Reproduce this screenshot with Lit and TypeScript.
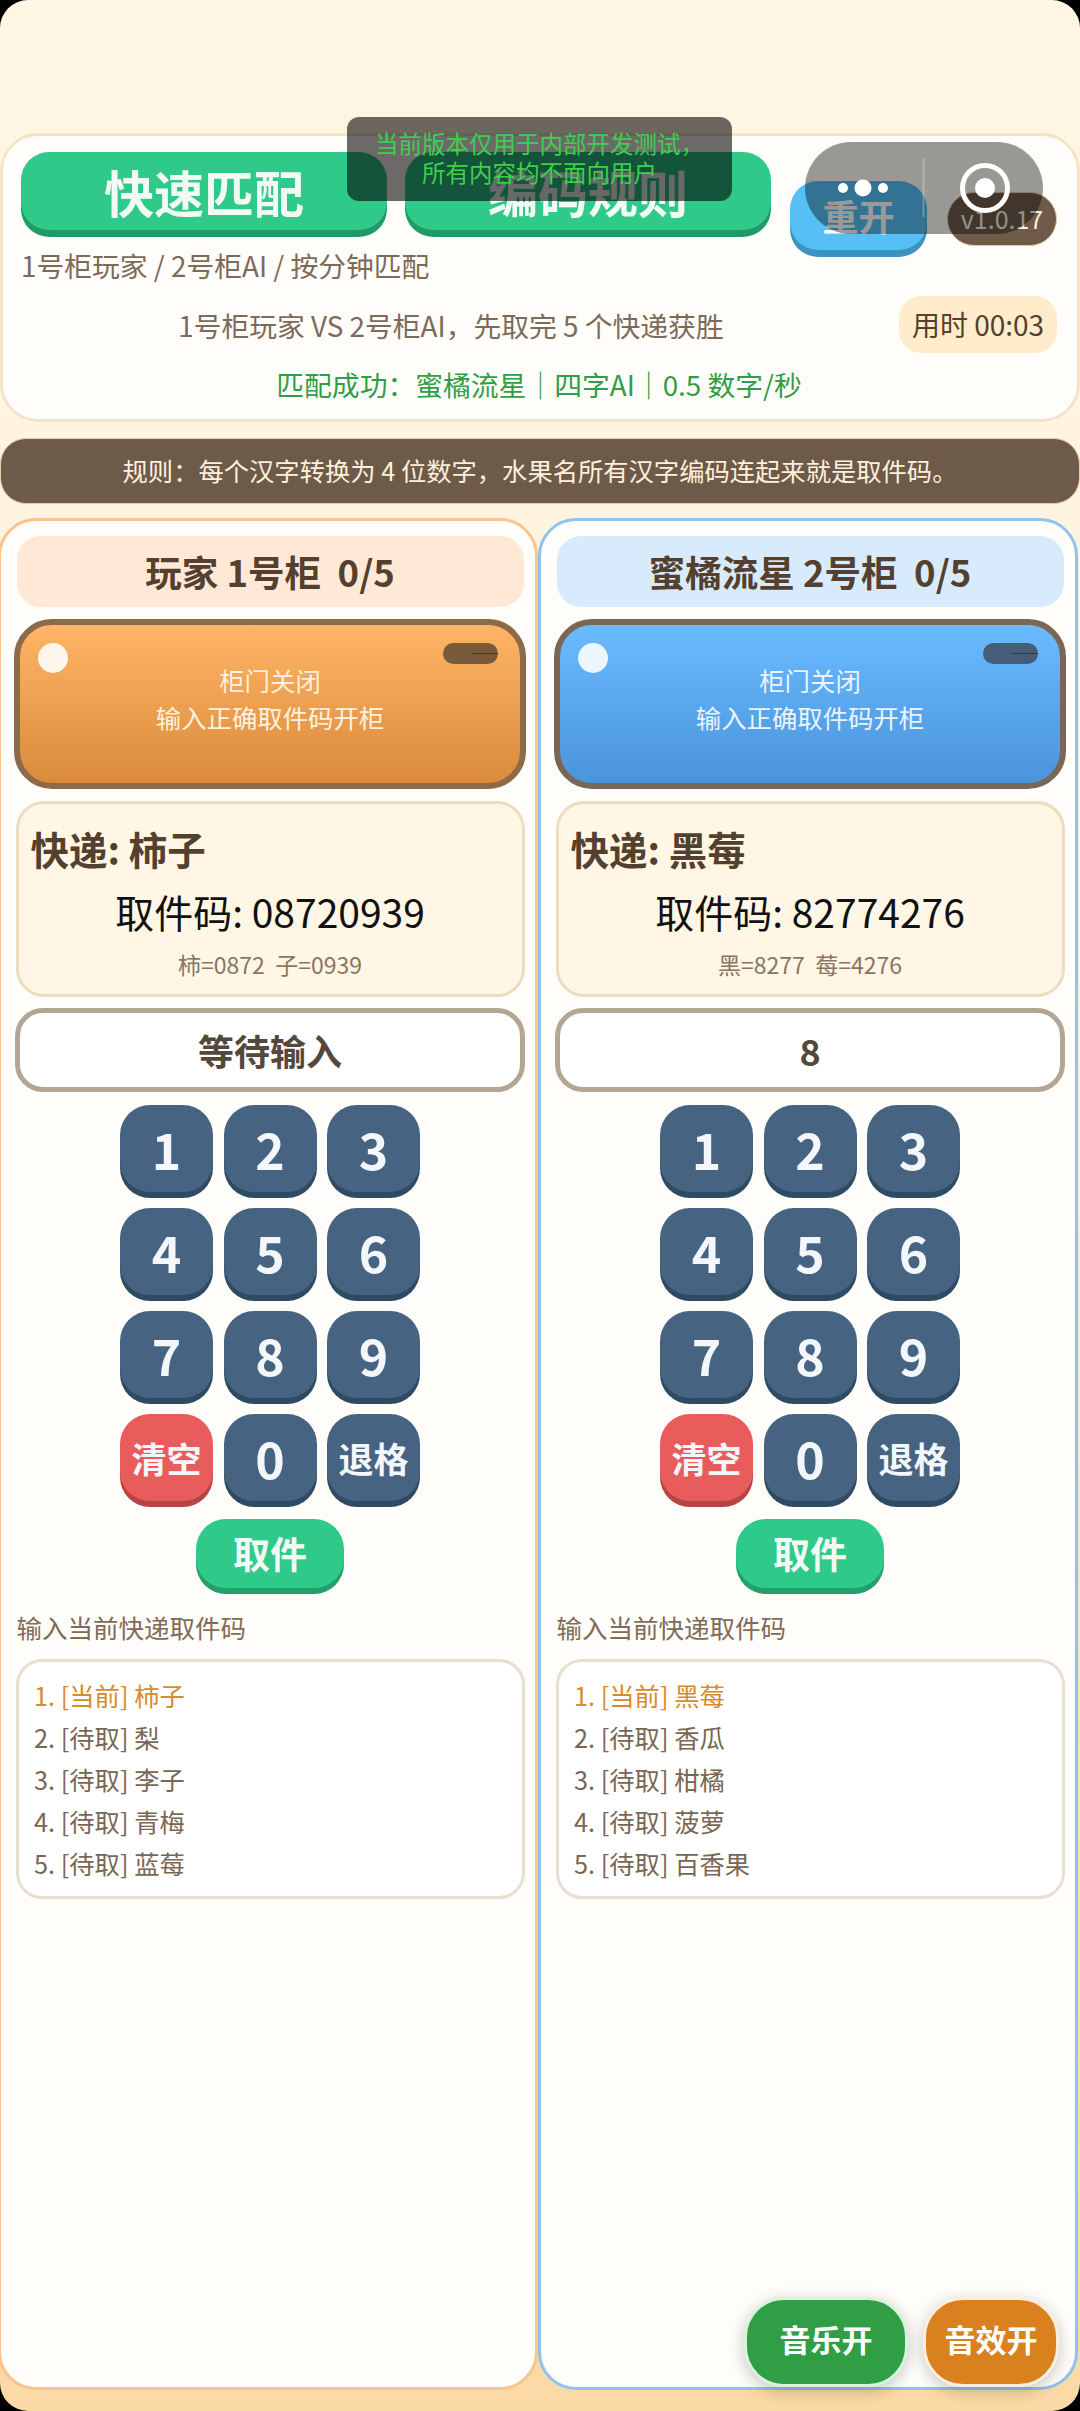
import { LitElement, html, css } from 'lit';
import { customElement, property } from 'lit/decorators.js';
import { classMap } from 'lit/directives/class-map.js';

const FONT = css`"Noto Sans CJK SC", "Noto Sans", sans-serif`;

interface Parcel {
  status: string;
  name: string;
}

const KEYS = ['1', '2', '3', '4', '5', '6', '7', '8', '9', '清空', '0', '退格'];

@customElement('locker-panel')
export class LockerPanel extends LitElement {
  @property() side = 'left'; // left = orange, right = blue
  @property() heading = '';
  @property() item = '';
  @property() code = '';
  @property() split = '';
  @property() entry = '';
  @property({ type: Array }) parcels: Parcel[] = [];

  static styles = css`
    :host {
      display: block;
      box-sizing: border-box;
      width: 540px;
      height: 1872px;
      padding: 15px 10.5px 0 14.5px;
      background: #fffdf9;
      border: 3.5px solid #f9c48d;
      border-radius: 38px;
      font-family: ${FONT};
      color: #54402e;
    }

    :host([side='right']) {
      border-color: #8fc3ec;
    }

    .title {
      height: 71px;
      margin: 0 1px;
      border-radius: 24px;
      background: #ffe9d6;
      font-size: 36.5px;
      font-weight: 700;
      line-height: 72px;
      text-align: center;
      white-space: pre;
    }

    :host([side='right']) .title {
      background: #d8ebfd;
    }

    .door {
      position: relative;
      box-sizing: border-box;
      height: 170px;
      margin: 12px -1.5px 0;
      padding-top: 36.5px;
      border: 6px solid #8c6a4a;
      border-radius: 38px;
      background: linear-gradient(#ffb566, #da8a3a);
      color: #fff1df;
      font-size: 25.4px;
      line-height: 37px;
      text-align: center;
    }

    :host([side='right']) .door {
      border-color: #7a6654;
      background: linear-gradient(#6bbaff, #4a94dc);
      color: #eaf4ff;
    }

    .led {
      position: absolute;
      left: 17.5px;
      top: 18px;
      width: 30px;
      height: 30px;
      border-radius: 50%;
      background: rgba(255, 255, 255, 0.88);
    }

    .handle {
      position: absolute;
      right: 22px;
      top: 18px;
      width: 55px;
      height: 21px;
      border-radius: 11px;
      background: #7a5a3c;
    }

    :host([side='right']) .handle {
      background: #465c78;
    }

    .handle::after {
      content: '';
      position: absolute;
      right: 0;
      top: 10px;
      width: 27px;
      height: 1px;
      background: rgba(40, 30, 20, 0.55);
    }

    .info {
      box-sizing: border-box;
      height: 196px;
      margin-top: 12px;
      padding: 21px 12px 0;
      border: 3px solid #ecdcc0;
      border-radius: 28px;
      background: #fff6e5;
    }

    .info-name {
      font-size: 38.5px;
      font-weight: 700;
      line-height: 46px;
    }

    .info-code {
      margin-top: 15px;
      color: #111;
      font-size: 39px;
      line-height: 50px;
      text-align: center;
    }

    .info-split {
      margin-top: 12px;
      color: #8a7561;
      font-size: 23px;
      line-height: 32px;
      text-align: center;
      white-space: pre;
    }

    .entry {
      box-sizing: border-box;
      height: 84px;
      margin: 11px -0.5px 0;
      border: 5px solid #b5a594;
      border-radius: 28px;
      background: #fff;
      color: #54483c;
      font-size: 36px;
      font-weight: 700;
      line-height: 74px;
      text-align: center;
    }

    .keys {
      display: grid;
      grid-template-columns: repeat(3, 93px);
      gap: 16.3px 10.4px;
      justify-content: center;
      margin-top: 12.5px;
    }

    .key {
      height: 87px;
      border-radius: 30px;
      background: #466481;
      box-shadow: 0 6px 0 #2f4a63;
      color: #f3f7fc;
      font-size: 50px;
      font-weight: 700;
      line-height: 87px;
      text-align: center;
    }

    .key.word {
      font-size: 35px;
    }

    .key.clear {
      background: #e95c5c;
      box-shadow: 0 6px 0 #b54444;
    }

    .submit {
      width: 148px;
      height: 69px;
      margin: 18px auto 0;
      border-radius: 30px;
      background: #2fc98a;
      box-shadow: 0 6px 0 #25a06c;
      color: #f3faf6;
      font-size: 37px;
      font-weight: 700;
      line-height: 69px;
      text-align: center;
    }

    .helper {
      margin: 20px 0 0 1px;
      color: #806b58;
      font-size: 25.5px;
      line-height: 38px;
    }

    .queue {
      box-sizing: border-box;
      height: 240px;
      margin-top: 13px;
      padding: 11.5px 0 0 15.5px;
      border: 3px solid #e7dfcf;
      border-radius: 26px;
      background: #fff;
      color: #7a6652;
      font-size: 25.3px;
      line-height: 42px;
    }

    .queue .now {
      color: #d98a2b;
    }
  `;

  render() {
    return html`
      <div class="title">${this.heading}</div>
      <div class="door">
        <div class="led"></div>
        <div class="handle"></div>
        柜门关闭<br />输入正确取件码开柜
      </div>
      <div class="info">
        <div class="info-name">快递: ${this.item}</div>
        <div class="info-code">取件码: ${this.code}</div>
        <div class="info-split">${this.split}</div>
      </div>
      <div class="entry">${this.entry}</div>
      <div class="keys">
        ${KEYS.map(
          (k) => html`<div class=${classMap({ key: true, word: k.length > 1, clear: k === '清空' })}>${k}</div>`
        )}
      </div>
      <div class="submit">取件</div>
      <div class="helper">输入当前快递取件码</div>
      <div class="queue">
        ${this.parcels.map(
          (p, i) => html`<div class=${classMap({ now: i === 0 })}>${i + 1}. [${p.status}] ${p.name}</div>`
        )}
      </div>
    `;
  }
}

@customElement('app-root')
export class AppRoot extends LitElement {
  static styles = css`
    :host {
      display: block;
      width: 1080px;
      height: 2411px;
      background: #000;
      font-family: ${FONT};
    }

    .screen {
      position: relative;
      box-sizing: border-box;
      height: 2411px;
      padding-top: 133px;
      overflow: hidden;
      border-radius: 28px;
      background: linear-gradient(#fff6e3 0%, #fff3dc 40%, #fad9a5 100%);
    }

    .head {
      box-sizing: border-box;
      height: 289px;
      padding: 16px 20px 0 18px;
      border: 3px solid #f5e3c8;
      border-radius: 38px;
      background: #fffdf9;
    }

    .head-top {
      display: flex;
      height: 85px;
      align-items: flex-start;
    }

    .big {
      flex: none;
      width: 366px;
      height: 78px;
      margin-right: 18px;
      border-radius: 28px;
      background: #2fc98a;
      box-shadow: 0 7px 0 #1f9a68;
      color: #f3faf6;
      font-size: 50px;
      font-weight: 700;
      line-height: 78px;
      text-align: center;
    }

    .restart {
      flex: none;
      width: 137px;
      height: 69px;
      margin: 29px 0 0 1px;
      border-radius: 28px;
      background: #56bff6;
      box-shadow: 0 7px 0 #3b93c0;
      color: #fff;
      font-size: 36px;
      font-weight: 700;
      line-height: 69px;
      text-align: center;
    }

    .version {
      flex: none;
      box-sizing: border-box;
      width: 110px;
      height: 54px;
      margin: 40px 0 0 20px;
      border: 1.5px solid #e6c8a0;
      border-radius: 27px;
      background: #6d5a48;
      color: #f8eedf;
      font-size: 25px;
      line-height: 51px;
      text-align: center;
    }

    .sub {
      margin-top: 9px;
      color: #7d6a58;
      font-size: 27.8px;
      line-height: 38px;
    }

    .vs {
      display: flex;
      align-items: center;
      gap: 18px;
      margin-top: 12px;
    }

    .vs-text {
      flex: 1;
      color: #7d6a58;
      font-size: 27.8px;
      text-align: center;
    }

    .timer {
      flex: none;
      width: 158px;
      height: 57px;
      border-radius: 22px;
      background: #ffeccb;
      color: #54402e;
      font-size: 28px;
      line-height: 57px;
      text-align: center;
    }

    .match {
      margin-top: 11px;
      color: #2f9e44;
      font-size: 27.8px;
      line-height: 40px;
      text-align: center;
    }

    .rule {
      box-sizing: border-box;
      height: 66px;
      margin-top: 16px;
      border: 1.5px solid #e6cfa8;
      border-radius: 26px;
      background: #6d5a48;
      color: #fff0dc;
      font-size: 25.3px;
      line-height: 63px;
      text-align: center;
    }

    .panels {
      display: flex;
      margin: 14px 0 0 -2px;
    }

    /* overlays the host app draws on top of the page */
    .toast {
      position: absolute;
      left: 347px;
      top: 117px;
      width: 385px;
      height: 84px;
      padding-top: 12px;
      box-sizing: border-box;
      border-radius: 12px;
      background: rgba(0, 0, 0, 0.58);
      color: #3ecf4e;
      font-size: 23.5px;
      line-height: 28.5px;
      text-align: center;
    }

    .capsule {
      position: absolute;
      left: 805px;
      top: 142px;
      display: block;
    }

    .sound {
      position: absolute;
      top: 2297px;
      box-sizing: border-box;
      height: 90px;
      border: 3px solid #d5f5dc;
      border-radius: 40px;
      background: #2f9e44;
      box-shadow: 0 4px 16px rgba(0, 0, 0, 0.22);
      color: #fff;
      font-size: 31px;
      font-weight: 700;
      line-height: 78px;
      text-align: center;
    }

    .sound.music {
      left: 744px;
      width: 164px;
    }

    .sound.fx {
      left: 923px;
      width: 136px;
      border-color: #ffeedd;
      background: #d9801f;
    }
  `;

  render() {
    const left: Parcel[] = [
      { status: '当前', name: '柿子' },
      { status: '待取', name: '梨' },
      { status: '待取', name: '李子' },
      { status: '待取', name: '青梅' },
      { status: '待取', name: '蓝莓' },
    ];
    const right: Parcel[] = [
      { status: '当前', name: '黑莓' },
      { status: '待取', name: '香瓜' },
      { status: '待取', name: '柑橘' },
      { status: '待取', name: '菠萝' },
      { status: '待取', name: '百香果' },
    ];

    return html`
      <div class="screen">
        <div class="head">
          <div class="head-top">
            <div class="big">快速匹配</div>
            <div class="big">编码规则</div>
            <div class="restart">重开</div>
            <div class="version">v1.0.17</div>
          </div>
          <div class="sub">1号柜玩家 / 2号柜AI / 按分钟匹配</div>
          <div class="vs">
            <div class="vs-text">1号柜玩家 VS 2号柜AI，先取完 5 个快递获胜</div>
            <div class="timer">用时 00:03</div>
          </div>
          <div class="match">匹配成功：蜜橘流星｜四字AI｜0.5 数字/秒</div>
        </div>
        <div class="rule">规则：每个汉字转换为 4 位数字，水果名所有汉字编码连起来就是取件码。</div>
        <div class="panels">
          <locker-panel
            side="left"
            heading="玩家 1号柜  0/5"
            item="柿子"
            code="08720939"
            split="柿=0872  子=0939"
            entry="等待输入"
            .parcels=${left}
          ></locker-panel>
          <locker-panel
            side="right"
            heading="蜜橘流星 2号柜  0/5"
            item="黑莓"
            code="82774276"
            split="黑=8277  莓=4276"
            entry="8"
            .parcels=${right}
          ></locker-panel>
        </div>

        <div class="toast">当前版本仅用于内部开发测试，<br />所有内容均不面向用户</div>

        <svg class="capsule" width="238" height="92" viewBox="0 0 238 92">
          <rect width="238" height="92" rx="46" fill="rgba(0,0,0,0.4)" />
          <rect x="117.5" y="16" width="2" height="59" fill="rgba(255,255,255,0.25)" />
          <circle cx="38" cy="46" r="5" fill="#fff" />
          <circle cx="58" cy="46" r="8.5" fill="#fff" />
          <circle cx="78" cy="46" r="5" fill="#fff" />
          <circle cx="180" cy="46" r="22.5" fill="none" stroke="#fff" stroke-width="5" />
          <circle cx="180" cy="46" r="10" fill="#fff" />
        </svg>

        <div class="sound music">音乐开</div>
        <div class="sound fx">音效开</div>
      </div>
    `;
  }
}
